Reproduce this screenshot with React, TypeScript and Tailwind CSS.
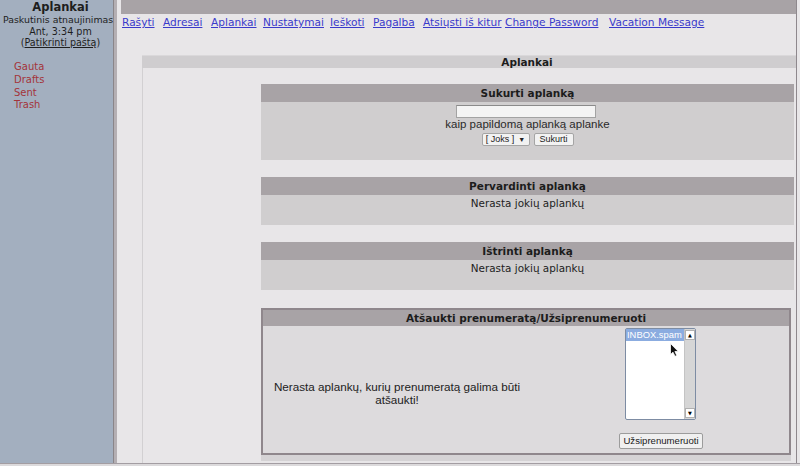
import React from "react";

const navItems: { t: string; w: string }[] = [
  { t: "Rašyti", w: "w-[41px]" },
  { t: "Adresai", w: "w-[48px]" },
  { t: "Aplankai", w: "w-[52px]" },
  { t: "Nustatymai", w: "w-[67px]" },
  { t: "Ieškoti", w: "w-[43px]" },
  { t: "Pagalba", w: "w-[50px]" },
  { t: "Atsiųsti iš kitur", w: "w-[82px]" },
  { t: "Change Password", w: "w-[104px]" },
  { t: "Vacation Message", w: "w-auto" },
];

function SectionHeader({ title }: { title: string }) {
  return (
    <div className="h-[18px] bg-[#a8a3a6] text-center text-[10.5px] font-bold leading-[18px] text-[#1c1c1c]">
      {title}
    </div>
  );
}

function Cursor() {
  return (
    <svg
      width="10"
      height="14"
      viewBox="0 0 10 14"
      className="absolute left-[44px] top-[14px]"
    >
      <path
        d="M0.5 0.5 L0.5 11.5 L3 9.2 L5 13.3 L6.8 12.5 L4.9 8.5 L8.3 8.5 Z"
        fill="#111"
        stroke="#fff"
        strokeWidth="0.8"
      />
    </svg>
  );
}

export default function App() {
  return (
    <div className="flex h-[466px] w-[800px] flex-col overflow-hidden bg-[#e8e6e8] font-['DejaVu_Sans',sans-serif] text-[#1e1e1e]">
      <div className="flex h-[463px] min-h-0">
        {/* Sidebar */}
        <aside className="w-[113px] shrink-0 overflow-hidden bg-[#a3afbf]">
          <div className="w-[121px]">
            <div className="pt-[1px] text-center text-[11.5px] font-bold leading-[13px] text-[#1e1e1e]">
              Aplankai
            </div>
            <div className="whitespace-nowrap pl-[3px] text-[9.4px] leading-[11.5px]">
              Paskutinis atnaujinimas:
            </div>
            <div className="text-center text-[9.6px] leading-[11.5px]">
              Ant, 3:34 pm
            </div>
            <div className="text-center text-[9.6px] leading-[11.5px]">
              (<span className="underline">Patikrinti paštą</span>)
            </div>
            <ul className="mt-[12.5px] pl-[14px] text-[10px] leading-[12.8px] text-[#a3343a]">
              <li>Gauta</li>
              <li>Drafts</li>
              <li>Sent</li>
              <li>Trash</li>
            </ul>
          </div>
        </aside>
        <div className="w-[1px] shrink-0 bg-[#8a8589]" />
        <div className="w-[3px] shrink-0 bg-[#b4afb3]" />

        {/* Main */}
        <main className="min-w-0 flex-1 overflow-hidden border-r border-[#8e888d]">
          <div className="ml-[4px] h-[14px] bg-[#a8a3a6]" />
          <nav className="flex h-[15px] whitespace-nowrap pl-[5px] pt-[1px] text-[10.6px] leading-[14px]">
            {navItems.map((n) => (
              <span key={n.t} className={`${n.w} shrink-0`}>
                <a className="text-[#3a3acb] underline">{n.t}</a>
              </span>
            ))}
          </nav>

          <div className="ml-[25px] mt-[26px] w-[770px]">
            <div className="h-[13px] border-t border-[#dad8da] bg-[#cfcdcf] text-center text-[10.5px] font-bold leading-[12px] text-[#1c1c1c]">
              Aplankai
            </div>
            <div className="h-[400px] border-l border-[#d2d0d2] pt-[16px]">
              <div className="mx-auto w-[533px]">
                {/* Create */}
                <SectionHeader title="Sukurti aplanką" />
                <div className="flex h-[58px] flex-col items-center bg-[#d0cecf] pt-[3px]">
                  <div className="ml-[-3px] h-[13px] w-[140px] border border-[#a3a3a3] border-t-[#8a8a8a] bg-[#f4f4f4]" />
                  <div className="font-['Liberation_Sans',Arial,sans-serif] text-[11.5px] leading-[13px] text-[#2a2a2a]">
                    kaip papildomą aplanką aplanke
                  </div>
                  <div className="mt-[2px] flex h-[13px] gap-[4px] font-['Liberation_Sans',Arial,sans-serif] text-[9px] leading-[11px] text-[#222]">
                    <span className="flex w-[48px] items-center justify-center gap-[4px] rounded-[2px] border border-[#a5a5a5] bg-[#f2f2f2]">
                      <span>[ Joks ]</span>
                      <span className="text-[7px]">▼</span>
                    </span>
                    <button className="w-[40px] rounded-[2px] border border-[#a5a5a5] bg-[#f2f2f2] leading-[11px]">
                      Sukurti
                    </button>
                  </div>
                </div>

                {/* Rename */}
                <div className="mt-[17px]">
                  <SectionHeader title="Pervardinti aplanką" />
                  <div className="h-[30px] bg-[#d0cecf] pt-[1px] text-center text-[10.4px] leading-[14px] text-[#222]">
                    Nerasta jokių aplankų
                  </div>
                </div>

                {/* Delete */}
                <div className="mt-[17px]">
                  <SectionHeader title="Ištrinti aplanką" />
                  <div className="h-[30px] bg-[#d0cecf] pt-[1px] text-center text-[10.4px] leading-[14px] text-[#222]">
                    Nerasta jokių aplankų
                  </div>
                </div>

                {/* Subscribe */}
                <div className="mr-[3px] mt-[18px]">
                  <div className="border-2 border-[#8f878c]">
                    <div className="h-[16px] bg-[#a8a3a6] text-center text-[10.5px] font-bold leading-[16px] text-[#1c1c1c]">
                      Atšaukti prenumeratą/Užsiprenumeruoti
                    </div>
                    <div className="grid h-[127px] grid-cols-[268px_1fr] bg-[#dddbdd]">
                      <div className="flex items-center justify-center px-[2px] pt-[6px] text-center font-['Liberation_Sans',Arial,sans-serif] text-[11.7px] leading-[13px] text-[#222]">
                        Nerasta aplankų, kurių prenumeratą galima būti atšaukti!
                      </div>
                      <div className="flex flex-col items-center pt-[2px]">
                        <div className="relative ml-[1px] flex h-[92px] w-[71px] rounded-[2px] border border-[#7d8ca3] bg-white">
                          <div className="min-w-0 flex-1 overflow-hidden">
                            <div className="h-[12px] whitespace-nowrap bg-[#8bace0] pl-[1px] font-['Liberation_Sans',Arial,sans-serif] text-[9.4px] leading-[12px] text-white">
                              INBOX.spam
                            </div>
                          </div>
                          <div className="flex w-[11px] flex-col justify-between border-l border-[#c4c4c4] bg-[#d6d6d6] py-[1px]">
                            <div className="flex h-[10px] items-center justify-center border border-[#b0b0b0] bg-white text-[5px] leading-none text-black">
                              ▲
                            </div>
                            <div className="flex h-[10px] items-center justify-center border border-[#b0b0b0] bg-white text-[5px] leading-none text-black">
                              ▼
                            </div>
                          </div>
                          <Cursor />
                        </div>
                        <button className="ml-[2px] mt-[13px] h-[16px] w-[84px] rounded-[2px] border border-[#9c9c9c] bg-[#f0f0f0] font-['Liberation_Sans',Arial,sans-serif] text-[9.6px] leading-[14px] text-[#222]">
                          Užsiprenumeruoti
                        </button>
                      </div>
                    </div>
                  </div>
                  <div className="h-[6px] bg-[#d5d3d5]" />
                </div>
              </div>
            </div>
          </div>
        </main>
        <div className="w-[3px] shrink-0 bg-[#e8e6e8]" />
      </div>
      <div className="h-[3px] border-t border-[#a39da2] bg-[#dcdadc]" />
    </div>
  );
}
